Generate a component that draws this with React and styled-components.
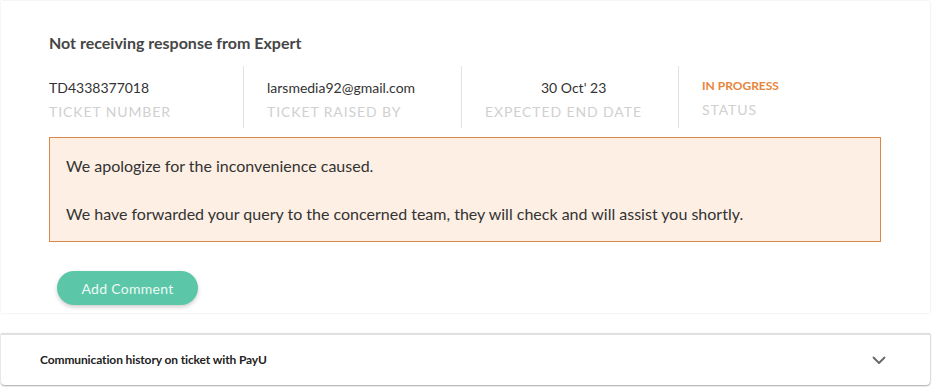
import React from "react";
import styled, { createGlobalStyle } from "styled-components";

const Global = createGlobalStyle`
  html, body { margin: 0; padding: 0; background: #ffffff; }
  body { font-family: Lato, "Open Sans", Arial, sans-serif; -webkit-font-smoothing: antialiased; }
  * { box-sizing: border-box; }
`;

const Page = styled.div`
  width: 932px;
  height: 387px;
  padding: 1px 2px 0 1px;
  display: flex;
  flex-direction: column;
`;

const Card = styled.section`
  height: 312px;
  background: #fff;
  box-shadow: 0 0 2px rgba(0, 0, 0, 0.12);
  padding: 32px 48px 0 48px;
  display: flex;
  flex-direction: column;
`;

const Title = styled.h2`
  margin: 0;
  font-size: 16px;
  line-height: 20px;
  font-weight: 700;
  color: #464646;
`;

const InfoRow = styled.div`
  margin-top: 13px;
  display: flex;
  height: 62px;
`;

const Col = styled.div`
  width: ${(p) => p.$w}px;
  padding-left: ${(p) => (p.$first ? 0 : 23)}px;
  border-left: ${(p) => (p.$first ? "none" : "1px solid #e2e2e2")};
  padding-top: ${(p) => (p.$status ? 10 : 12)}px;
  display: flex;
  flex-direction: column;
  gap: 4px;
`;

const Value = styled.div`
  font-size: 14px;
  line-height: 20px;
  color: #333;
  padding-left: ${(p) => p.$indent || 0}px;
  white-space: nowrap;
`;

const StatusValue = styled.div`
  font-size: 12px;
  line-height: 20px;
  font-weight: 700;
  color: #e8843a;
`;

const Label = styled.div`
  font-size: 14px;
  line-height: 20px;
  letter-spacing: 0.9px;
  text-transform: uppercase;
  color: #d0d0d0;
  white-space: nowrap;
`;

const Notice = styled.div`
  margin-top: 9px;
  width: 832px;
  background: #fdefe4;
  border: 1px solid #d9884a;
  padding: 16px 16px 15px;
  font-size: 16px;
  line-height: 24px;
  color: #333;
  p { margin: 0; }
  p + p { margin-top: 24px; }
`;

const AddButton = styled.button`
  margin: 29px 0 0 8px;
  align-self: flex-start;
  width: 141px;
  height: 34px;
  border: none;
  border-radius: 17px;
  background: #5bc7a8;
  color: #eef9f5;
  font-family: Lato, Arial, sans-serif;
  font-size: 14px;
  letter-spacing: 0.3px;
  box-shadow: 0 2px 4px rgba(0, 0, 0, 0.2);
  cursor: pointer;
`;

const Accordion = styled.div`
  margin-top: 20px;
  height: 52px;
  border-top: 2px solid #e0e0e0;
  border-radius: 0 0 4px 4px;
  box-shadow: 0 1px 2px rgba(0, 0, 0, 0.35), 1px 0 1px rgba(0, 0, 0, 0.06);
  background: #fff;
  display: flex;
  align-items: center;
  justify-content: space-between;
  padding: 0 44px 0 39px;
`;

const AccTitle = styled.span`
  font-size: 12px;
  font-weight: 700;
  letter-spacing: -0.12px;
  color: #222;
  margin-top: -2px;
`;

const Chevron = () => (
  <svg width="14" height="9" viewBox="0 0 14 9" fill="none">
    <path d="M1.5 1.5 L7 7 L12.5 1.5" stroke="#666" strokeWidth="1.8" strokeLinecap="round" strokeLinejoin="round" />
  </svg>
);

export default function App() {
  return (
    <>
      <Global />
      <Page>
        <Card>
          <Title>Not receiving response from Expert</Title>
          <InfoRow>
            <Col $first $w={194}>
              <Value>TD4338377018</Value>
              <Label>Ticket Number</Label>
            </Col>
            <Col $w={218}>
              <Value>larsmedia92@gmail.com</Value>
              <Label>Ticket Raised By</Label>
            </Col>
            <Col $w={217}>
              <Value $indent={56}>30 Oct' 23</Value>
              <Label>Expected End Date</Label>
            </Col>
            <Col $status $w={200}>
              <StatusValue>IN PROGRESS</StatusValue>
              <Label>Status</Label>
            </Col>
          </InfoRow>
          <Notice>
            <p>We apologize for the inconvenience caused.</p>
            <p>We have forwarded your query to the concerned team, they will check and will assist you shortly.</p>
          </Notice>
          <AddButton>Add Comment</AddButton>
        </Card>
        <Accordion>
          <AccTitle>Communication history on ticket with PayU</AccTitle>
          <Chevron />
        </Accordion>
      </Page>
    </>
  );
}
